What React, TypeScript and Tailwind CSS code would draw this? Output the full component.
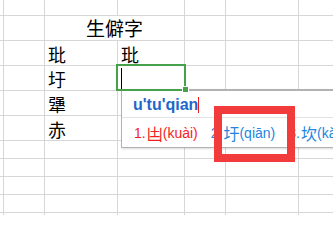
import React from 'react';

// column widths incl. the 1px right gridline, row heights incl. bottom gridline
const colCount = 7;
const rowCount = 11;

const cellText: Record<string, string> = {
  '2-2': '玭',
  '2-3': '玭',
  '3-2': '圩',
  '4-2': '犟',
  '5-2': '赤',
};

const Cell: React.FC<{ r: number; c: number }> = ({ r, c }) => {
  const text = cellText[`${r}-${c}`];
  const isActive = r === 3 && c === 3;
  return (
    <div className="border-r border-b border-[#d6d6d6] flex items-end pl-[3px] pb-[2px] overflow-hidden">
      {text && (
        <span className="font-['Noto_Sans_CJK_SC',sans-serif] text-[18px] leading-none text-black">{text}</span>
      )}
      {isActive && <span className="block w-px h-[21px] bg-black mb-[-1px]" />}
    </div>
  );
};

const Candidate: React.FC<{ n: number; ch: string; py: string; color: string }> = ({ n, ch, py, color }) => (
  <span className={`flex items-center shrink-0 ${color}`}>
    <span>{n}.</span>
    <span className="ml-[1px] font-['Noto_Sans_CJK_SC',sans-serif] text-[16px] leading-none">{ch}</span>
    <span>({py})</span>
  </span>
);

export default function App() {
  const cells: React.ReactNode[] = [];
  for (let r = 0; r < rowCount; r++) {
    for (let c = 0; c < colCount; c++) {
      if (r === 1 && c === 2) {
        // merged header over the two text columns
        cells.push(
          <div key={`${r}-${c}`} className="col-span-2 border-r border-b border-[#d6d6d6] flex items-end justify-center pb-[3px]">
            <span className="font-['Noto_Sans_CJK_SC',sans-serif] text-[19px] leading-none text-black">生僻字</span>
          </div>
        );
        continue;
      }
      if (r === 1 && c === 3) continue;
      cells.push(<Cell key={`${r}-${c}`} r={r} c={c} />);
    }
  }

  return (
    <div className="relative w-[333px] h-[215px] overflow-hidden bg-white">
      {/* Sheet grid */}
      <div className="grid w-[340px] grid-cols-[4px_41px_73px_67px_41px_73px_41px] grid-rows-[16px_25px_25px_25px_25px_25px_18px_18px_18px_18px_18px]">
        {cells}
      </div>

      {/* IME candidate window */}
      <div className="absolute left-[121px] top-[89px] w-[260px] h-[59px] bg-white border-t-2 border-l border-b border-[#b2b2b2] shadow-[1px_1px_2px_rgba(0,0,0,0.15)] font-['Liberation_Sans',sans-serif]">
        <div className="h-[27px] flex items-center pl-[11px] pt-[2px] border-b border-[#e2e2e2]">
          <span className="text-[16px] leading-none font-bold text-[#1c68cc]">u'tu'qian</span>
          <span className="block w-px h-[16px] bg-[#f01c1c]" />
        </div>
        <div className="h-[29px] flex items-center gap-[13px] pl-[12px] text-[14px] leading-none whitespace-nowrap">
          <Candidate n={1} ch="凷" py="kuài" color="text-[#f21d1d]" />
          <Candidate n={2} ch="圩" py="qiān" color="text-[#2286e0]" />
          <Candidate n={3} ch="坎" py="kǎn" color="text-[#2286e0]" />
        </div>
      </div>

      {/* Selected cell outline + fill handle */}
      <div className="absolute left-[116px] top-[64px] w-[70px] h-[27px] border-2 border-[#45a24b]" />
      <div className="absolute left-[182px] top-[86px] w-[7px] h-[7px] bg-[#45a24b] border border-white" />

      {/* Red highlight box */}
      <div className="absolute left-[214px] top-[106px] w-[81px] h-[56px] border-[8px] border-[#f23b3b]" />
    </div>
  );
}
